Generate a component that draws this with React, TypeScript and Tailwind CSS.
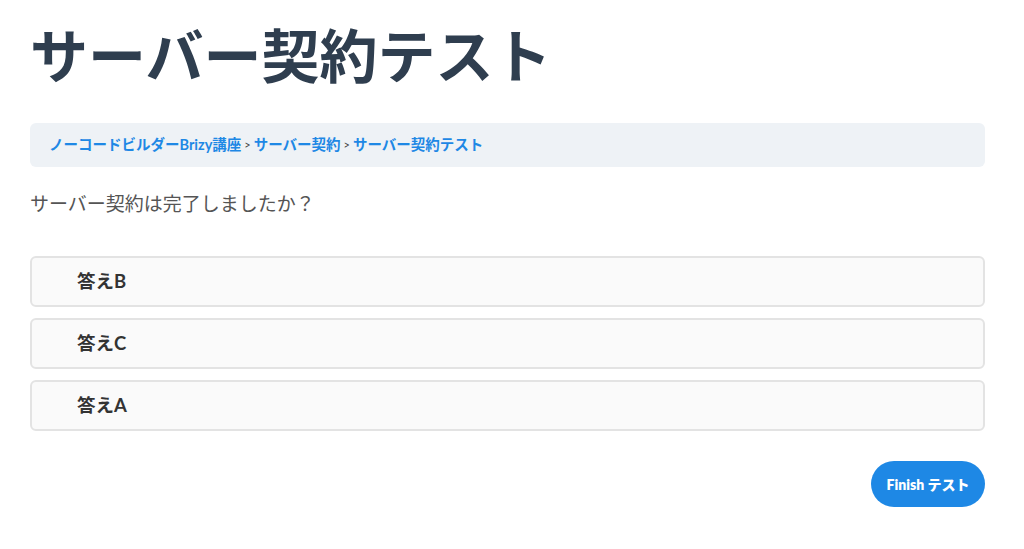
const answers = ["答えB", "答えC", "答えA"];

const font = "font-['Lato','Noto_Sans_CJK_JP',sans-serif]";

export default function App() {
  return (
    <div className={`min-h-[549px] bg-white pl-[30px] pr-[39px] pt-[20px] ${font}`}>
      <h1 className="text-[58px] font-bold leading-[72px] text-[#2f3e4f]">
        サーバー契約テスト
      </h1>

      <nav className="mt-[31px] flex h-[44px] items-center rounded-md bg-[#eef2f6] px-[19px] text-[14.5px] font-bold text-[#1e88e5]">
        <a>ノーコードビルダーBrizy講座</a>
        <span className="mx-[3px] text-[11px] font-normal text-[#444]">&gt;</span>
        <a>サーバー契約</a>
        <span className="mx-[3px] text-[11px] font-normal text-[#444]">&gt;</span>
        <a>サーバー契約テスト</a>
      </nav>

      <p className="mt-[22px] text-[19px] leading-[30px] text-[#555]">
        サーバー契約は完了しましたか？
      </p>

      <div className="mt-[37px] flex flex-col gap-[11px]">
        {answers.map((a) => (
          <div
            key={a}
            className="flex h-[51px] items-center rounded-md border-2 border-[#e3e3e3] bg-[#fafafa] pl-[45px] text-[18.5px] font-bold text-[#333]"
          >
            {a}
          </div>
        ))}
      </div>

      <div className="mt-[30px] flex justify-end">
        <button className="h-[46px] w-[114px] rounded-full bg-[#1e88e5] text-[14px] font-extrabold text-white">
          Finish テスト
        </button>
      </div>
    </div>
  );
}
